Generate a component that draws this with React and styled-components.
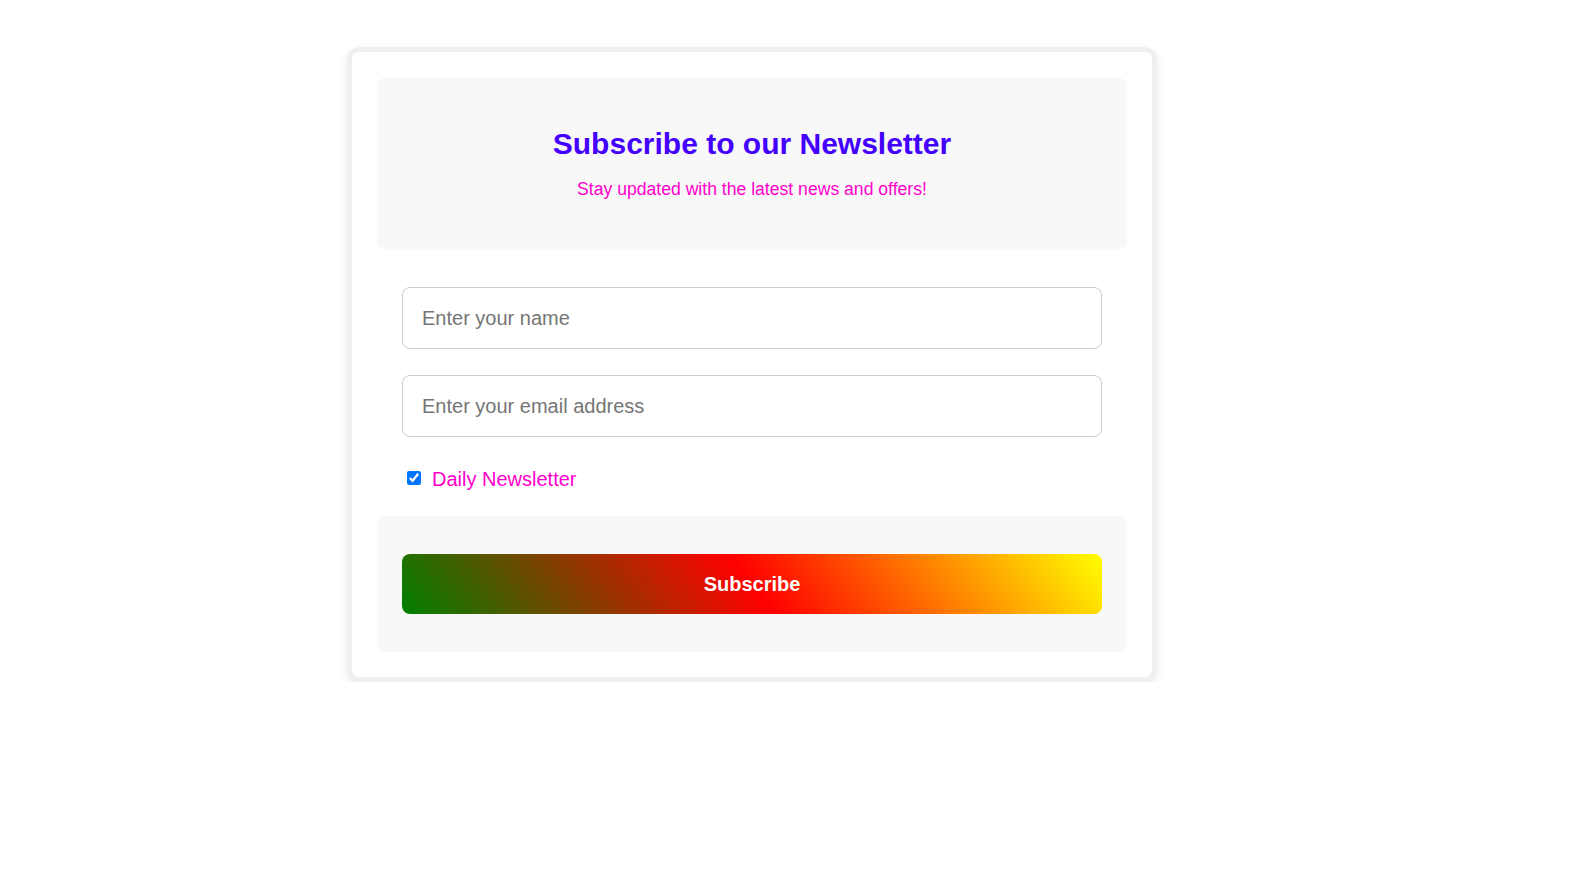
import React from 'react';

import styled, { createGlobalStyle } from 'styled-components';

const GlobalStyle = createGlobalStyle`
  body {
    margin: 0;
    background: #ffffff;
    font-family: "Liberation Sans", Arial, sans-serif;
  }
`;

const Page = styled.div`
  padding: 47px 0 0 347px;
`;

const Card = styled.div`
  box-sizing: border-box;
  width: 810px;
  padding: 25px;
  background: #ffffff;
  border: 5px solid #f0f0f0;
  border-radius: 12px;
  box-shadow: 0 4px 10px rgba(0, 0, 0, 0.08);
`;

const Header = styled.div`
  padding: 50px 20px 50px;
  background: #f8f8f8;
  border-radius: 10px;
  text-align: center;
`;

const Title = styled.h2`
  margin: 0 0 18px;
  font-size: 30px;
  font-weight: bold;
  color: #4400ff;
`;

const Subtitle = styled.p`
  margin: 0;
  font-size: 17.6px;
  color: #ff00cc;
`;

const Form = styled.div`
  display: flex;
  flex-direction: column;
  gap: 26px;
  padding: 37px 25px 25px;
`;

const Input = styled.input`
  box-sizing: border-box;
  width: 100%;
  height: 62px;
  padding: 0 19px;
  border: 1px solid #cccccc;
  border-radius: 8px;
  font-family: inherit;
  font-size: 20px;
  color: #333333;
  outline: none;

  &::placeholder {
    color: #757575;
  }
`;

const CheckRow = styled.label`
  display: flex;
  align-items: center;
  margin-top: 5px;
  font-size: 20px;
  line-height: 23px;
  color: #ff00cc;
`;

const Check = styled.input`
  width: 14px;
  height: 14px;
  margin: -3px 11px 0 5px;
`;

const Footer = styled.div`
  padding: 38px 25px;
  background: #f8f8f8;
  border-radius: 10px;
`;

const Button = styled.button`
  display: block;
  width: 100%;
  height: 60px;
  border: none;
  border-radius: 8px;
  background: linear-gradient(52deg, green, red, yellow);
  color: #ffffff;
  font-family: inherit;
  font-size: 20px;
  font-weight: bold;
  cursor: pointer;
`;

const App = () =>
    <Page>
        <GlobalStyle />
        <Card>
            <Header>
                <Title>Subscribe to our Newsletter</Title>
                <Subtitle>Stay updated with the latest news and offers!</Subtitle>
            </Header>
            <Form>
                <Input type="text" placeholder="Enter your name" />
                <Input type="email" placeholder="Enter your email address" />
                <CheckRow>
                    <Check type="checkbox" defaultChecked />
                    Daily Newsletter
                </CheckRow>
            </Form>
            <Footer>
                <Button type="button">Subscribe</Button>
            </Footer>
        </Card>
    </Page>;

export default App;
